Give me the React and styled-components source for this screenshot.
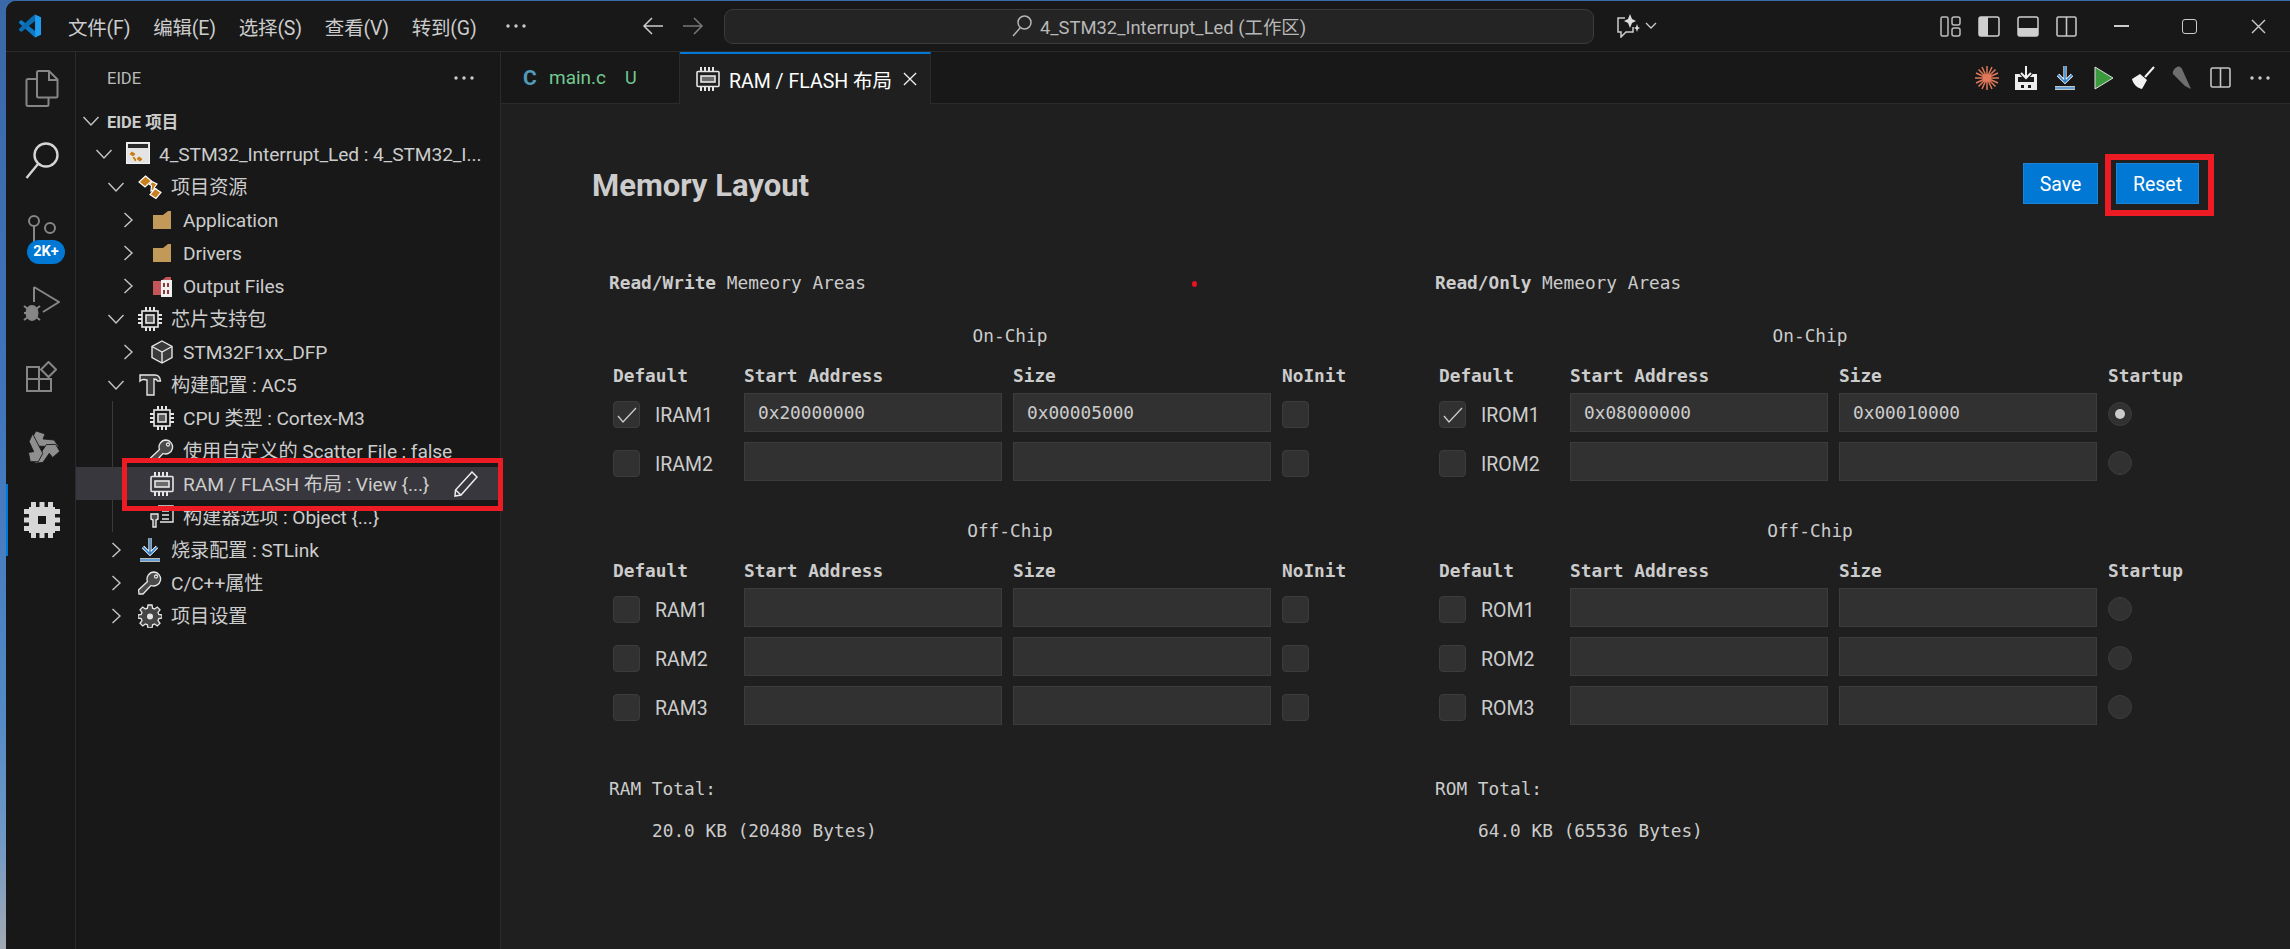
import React from "react"
import styled, { createGlobalStyle } from "styled-components"

const SANS = `Roboto, "Noto Sans CJK SC", sans-serif`
const MONO = `"DejaVu Sans Mono", "Noto Sans CJK SC", monospace`

const GlobalStyle = createGlobalStyle`
    html, body {
        margin: 0;
        padding: 0;
        background: #3e6fb0;
    }
    * {
        box-sizing: border-box;
    }
`

/* ---------- icons ---------- */

const VsCodeLogo = () => (
    <svg width="24" height="24" viewBox="0 0 100 100">
        <polygon points="4,32 4,38 71,98 71,71 14,25" fill="#0a7ac4" />
        <polygon points="71,2 71,29 14,75 4,68 4,62 52,17" fill="#0a6bb0" />
        <polygon points="71,2 96,14 96,86 71,98" fill="#1f9cf0" />
    </svg>
)

const ArrowLeft = ({ color = "#cccccc" }) => (
    <svg width="22" height="20" viewBox="0 0 22 20" fill="none" stroke={color} strokeWidth="1.5">
        <path d="M21 10H2M10 2l-8 8 8 8" />
    </svg>
)

const ArrowRight = ({ color = "#777777" }) => (
    <svg width="22" height="20" viewBox="0 0 22 20" fill="none" stroke={color} strokeWidth="1.5">
        <path d="M1 10h19M12 2l8 8-8 8" />
    </svg>
)

const SmallSearch = () => (
    <svg width="20" height="22" viewBox="0 0 20 22" fill="none" stroke="#b5b5b5" strokeWidth="1.5">
        <circle cx="12.5" cy="7.5" r="6.5" />
        <path d="M8 13L1 21" />
    </svg>
)

const ChatIcon = () => (
    <svg width="24" height="24" viewBox="0 0 24 24" fill="none">
        <path d="M9 4H2v14h3v5l5-5h7v-5" stroke="#cccccc" strokeWidth="1.5" />
        <path d="M14 0l2 5 4 2-4 2-2 5-2-5-4-2 4-2zM21 10l1 3 2 1-2 1-1 3-1-3-2-1 2-1z" fill="#dddddd" />
    </svg>
)

const ChevronSmall = () => (
    <svg width="12" height="8" viewBox="0 0 12 8" fill="none" stroke="#cccccc" strokeWidth="1.3">
        <path d="M1 1l5 5 5-5" />
    </svg>
)

const LayoutGrid = () => (
    <svg width="21" height="21" viewBox="0 0 21 21" fill="none" stroke="#bdbdbd" strokeWidth="1.5">
        <rect x="1" y="1" width="7" height="19" rx="1.5" />
        <rect x="12" y="1" width="8" height="8" rx="2" />
        <rect x="12" y="12" width="8" height="8" rx="2" />
    </svg>
)

const LayoutSide = () => (
    <svg width="22" height="21" viewBox="0 0 22 21">
        <rect x="1" y="1" width="20" height="19" rx="2" fill="none" stroke="#cfcfcf" strokeWidth="1.5" />
        <rect x="1" y="1" width="9" height="19" fill="#cfcfcf" />
    </svg>
)

const LayoutPanel = () => (
    <svg width="22" height="21" viewBox="0 0 22 21">
        <rect x="1" y="1" width="20" height="19" rx="2" fill="none" stroke="#cfcfcf" strokeWidth="1.5" />
        <rect x="1" y="12" width="20" height="8" fill="#cfcfcf" />
    </svg>
)

const SplitIcon = ({ color = "#c4c4c4" }) => (
    <svg width="21" height="21" viewBox="0 0 21 21" fill="none" stroke={color} strokeWidth="1.6">
        <rect x="1" y="1" width="19" height="19" rx="1.5" />
        <path d="M10.5 1v19" />
    </svg>
)

const CloseGlyph = ({ size = 15, color = "#cccccc" }) => (
    <svg width={size} height={size} viewBox="0 0 15 15" fill="none" stroke={color} strokeWidth="1.4">
        <path d="M1 1l13 13M14 1L1 14" />
    </svg>
)

const Dots = ({ color = "#cccccc" }) => (
    <svg width="20" height="4" viewBox="0 0 20 4" fill={color}>
        <circle cx="2" cy="2" r="1.7" />
        <circle cx="10" cy="2" r="1.7" />
        <circle cx="18" cy="2" r="1.7" />
    </svg>
)

const FilesIcon = () => (
    <svg width="34" height="37" viewBox="0 0 34 37" fill="none" stroke="#868686" strokeWidth="2">
        <path d="M12 2.5c0-.8.7-1.5 1.5-1.5H24l8.5 8.5V26c0 .8-.7 1.5-1.5 1.5H13.5c-.8 0-1.5-.7-1.5-1.5z" />
        <path d="M24 1v9h8.5M12 9H3c-.8 0-1.5.7-1.5 1.5v24c0 .8.7 1.5 1.5 1.5h19c.8 0 1.5-.7 1.5-1.5v-7" />
    </svg>
)

const SearchIcon = () => (
    <svg width="34" height="37" viewBox="0 0 34 37" fill="none" stroke="#d4d4d4" strokeWidth="2.4">
        <circle cx="21" cy="13" r="11.5" />
        <path d="M13 22L1.5 36" />
    </svg>
)

const ScmIcon = () => (
    <svg width="30" height="34" viewBox="0 0 30 34" fill="none" stroke="#868686" strokeWidth="2">
        <circle cx="7" cy="6" r="5" />
        <circle cx="23" cy="13" r="5" />
        <path d="M7 11v22" />
    </svg>
)

const DebugIcon = () => (
    <svg width="37" height="36" viewBox="0 0 37 36" fill="none" stroke="#868686" strokeWidth="2">
        <path d="M11 1l25 15-16 10M11 1v15" />
        <ellipse cx="9" cy="27" rx="5.5" ry="7" fill="#868686" />
        <path d="M1 20l4 3M1 27h4M1 34l4-3M17 20l-4 3M17 34l-4-3" />
    </svg>
)

const ExtensionsIcon = () => (
    <svg width="31" height="31" viewBox="0 0 31 31" fill="none" stroke="#868686" strokeWidth="2">
        <path d="M1 6h12v24H1zM1 18h24v12H13" />
        <path d="M22.5 1l7.5 7.5-7.5 7.500-7.500-7.500z" />
    </svg>
)

const STAR_ARM = "M12 1L21 4L19 9L30 10L35 17L13 16L8 8Z"

const StarIcon = () => (
    <svg width="36" height="36" viewBox="0 0 36 36" fill="#8f8f8f" stroke="#181818" strokeWidth="0.8">
        <path d={STAR_ARM} />
        <path d={STAR_ARM} transform="rotate(120 18 18)" />
        <path d={STAR_ARM} transform="rotate(240 18 18)" />
    </svg>
)

const ChipFilled = () => (
    <svg width="36" height="36" viewBox="0 0 36 36" fill="#d7d7d7">
        <path fillRule="evenodd" d="M5 5h26v26H5zM14 14v8h8v-8z" />
        <path d="M7 0h5v6H7zM15.500 0h5v6h-5zM24 0h5v6h-5zM7 30h5v6H7zM15.500 30h5v6h-5zM24 30h5v6h-5zM0 7h6v5H0zM0 15.500h6v5H0zM0 24h6v5H0zM30 7h6v5h-6zM30 15.500h6v5h-6zM30 24h6v5h-6z" />
    </svg>
)

const Chevron = ({ open }) => (
    <svg width="22" height="22" viewBox="0 0 22 22" fill="none" stroke="#c5c5c5" strokeWidth="1.4">
        {open ? <path d="M3.5 7l7.5 8 7.5-8" /> : <path d="M7.5 4l7.5 7-7.5 7" />}
    </svg>
)

const ProjectIcon = () => (
    <svg width="24" height="24" viewBox="0 0 24 24">
        <rect x="0.5" y="0.5" width="23" height="21" fill="#e4e4e4" stroke="#f2f2f2" />
        <rect x="2" y="2" width="20" height="4" fill="#2a2a2a" />
        <path d="M6 9l4 3-3 3-4-3zM13 14l4 3-3 3-4-3zM6 15l3 5 2-2-3-4z" fill="#c8801f" stroke="#ffffff" strokeWidth="0.5" />
    </svg>
)

const ResourceIcon = () => (
    <svg width="24" height="24" viewBox="0 0 24 24" fill="#c8801f" stroke="#ffffff" strokeWidth="1.2">
        <path d="M7.5 1l6 5-6.5 6-6-5z" />
        <path d="M14 6.5l5 2.5-3 4 2 1-5 2 .5-5.500-2-1z" />
        <path d="M17 13.5l6 4-5 6-6-4z" />
    </svg>
)

const FolderIcon = () => (
    <svg width="24" height="24" viewBox="0 0 24 24" fill="#c19a59">
        <path d="M3 7h10l5-4h3v18H3z" />
    </svg>
)

const OutputIcon = () => (
    <svg width="24" height="24" viewBox="0 0 24 24">
        <path d="M3 7h8l5-4h5v18H3z" fill="#c5565a" />
        <rect x="11" y="6" width="11" height="17" fill="#f0f0f0" />
        <path d="M13 9h2v4h-2zM17 9h2v4h-2zM13 16h2v4h-2zM17 16h2v4h-2z" fill="#8a3a3d" />
    </svg>
)

const ChipIcon = () => (
    <svg width="24" height="24" viewBox="0 0 24 24" fill="none" stroke="#e6e6e6" strokeWidth="1.6">
        <rect x="4" y="4" width="16" height="16" />
        <rect x="8" y="8" width="8" height="8" fill="#5a5a5a" />
        <path strokeWidth="2" d="M8 0v4M12 0v4M16 0v4M8 20v4M12 20v4M16 20v4M0 8h4M0 12h4M0 16h4M20 8h4M20 12h4M20 16h4" />
    </svg>
)

const CubeIcon = () => (
    <svg width="24" height="24" viewBox="0 0 24 24" stroke="#e6e6e6" strokeWidth="1.4" fill="#3a3a3a">
        <path d="M12 1l10 5.5v11L12 23 2 17.500v-11z" />
        <path d="M2 6.5l10 5.5 10-5.500M12 12v11" fill="none" />
    </svg>
)

const HammerIcon = () => (
    <svg width="24" height="24" viewBox="0 0 24 24" fill="#3c3c3c" stroke="#e6e6e6" strokeWidth="1.4">
        <path d="M2 2h15c3 0 5 2 5.500 6h-3c-.5-1.500-2-2-3.500-2v16H9V7C6 6 4 6 2 8z" />
    </svg>
)

const KeyIcon = () => (
    <svg width="24" height="24" viewBox="0 0 24 24" fill="#4a4a4a" stroke="#e6e6e6" strokeWidth="1.3">
        <path d="M16 1a7 7 0 1 1-3 13.500L5 23H1l-.5-4 9-8.500A7 7 0 0 1 16 1z" />
        <circle cx="18" cy="5.5" r="1.5" fill="#181818" />
    </svg>
)

const RamIcon = ({ fill = "none" }) => (
    <svg width="24" height="24" viewBox="0 0 24 24" fill="none" stroke="#e6e6e6" strokeWidth="1.6">
        <rect x="1" y="4.5" width="22" height="15" rx="1" fill={fill} />
        <rect x="5" y="9" width="14" height="6" fill="#6a6a6a" />
        <path strokeWidth="2" d="M5 0v4M9 0v4M13 0v4M17 0v4M5 20v4M9 20v4M13 20v4M17 20v4" />
    </svg>
)

const BuilderIcon = () => (
    <svg width="24" height="24" viewBox="0 0 24 24" fill="none" stroke="#e6e6e6" strokeWidth="1.4">
        <path d="M8 1h15v16H10" />
        <path d="M12 6h7M12 10h7M12 14h7" />
        <path d="M1 9h7v5l-2 1v7H3v-7l-2-1z" fill="#4a4a4a" />
    </svg>
)

const DownloadIcon = () => (
    <svg width="24" height="26" viewBox="0 0 24 26" fill="none">
        <path d="M12 1v16M5 10l7 7 7-7" stroke="#ffffff" strokeWidth="3.2" />
        <path d="M12 1v16M5 10l7 7 7-7" stroke="#2f7fc9" strokeWidth="1.6" />
        <path d="M2 23h20" stroke="#ffffff" strokeWidth="3.4" />
        <path d="M2 23h20" stroke="#2f7fc9" strokeWidth="1.5" />
    </svg>
)

const GearIcon = () => (
    <svg width="24" height="24" viewBox="0 0 24 24" fill="#464646" stroke="#e6e6e6" strokeWidth="1.3">
        <path d="M10 1h4l.6 3.200 2 .8L19.300 3 22 5.800 20 8.400l.8 2L24 11v3l-3.200.6-.8 2 2 2.700L19.300 22l-2.700-2-2 .8L14 24h-4l-.6-3.200-2-.8L4.700 22 2 19.300l2-2.700-.8-2L0 14v-3l3.200-.6.800-2-2-2.600L4.700 3l2.700 2 2-.8z" />
        <circle cx="12" cy="12.5" r="3" fill="#e6e6e6" stroke="none" />
    </svg>
)

const PencilOutline = () => (
    <svg width="24" height="26" viewBox="0 0 24 26" fill="none" stroke="#eeeeee" strokeWidth="1.5">
        <path d="M18 1l5 5L7 24l-6 1 .5-6z" />
        <path d="M1.5 19L7 24" />
    </svg>
)

const AsteriskIcon = () => (
    <svg width="26" height="26" viewBox="0 0 26 26" stroke="#e2785a" strokeWidth="1.5">
        <path d="M13 1v24M1 13h24M4.500 4.500l17 17M21.500 4.500l-17 17M8 2l10 22M18 2L8 24M2 8l22 10M24 8L2 18" />
    </svg>
)

const BuildIcon = () => (
    <svg width="24" height="26" viewBox="0 0 24 26">
        <path d="M1 9h22v16H1z" fill="#ededed" />
        <path d="M4 12h16v5H4zM7 20h3v3H7zM14 20h3v3h-3z" fill="#1a1a1a" />
        <path d="M12 1v11M7 8l5 5 5-5" fill="none" stroke="#1a1a1a" strokeWidth="4" />
        <path d="M12 1v11M7 8l5 5 5-5" fill="none" stroke="#f0f0f0" strokeWidth="2" />
    </svg>
)

const PlayIcon = () => (
    <svg width="20" height="24" viewBox="0 0 20 24">
        <path d="M1 1l18 11L1 23z" fill="#3b9a3e" stroke="#e0e0e0" strokeWidth="1" />
    </svg>
)

const BroomIcon = () => (
    <svg width="24" height="24" viewBox="0 0 24 24" fill="#f2f2f2">
        <path d="M23 1L14 11" stroke="#f2f2f2" strokeWidth="2" />
        <path d="M9 8l7 6-5 9c-5-1-9-5-10-10z" />
    </svg>
)

const PencilMuted = () => (
    <svg width="20" height="24" viewBox="0 0 20 24" fill="#6e6e6e">
        <path d="M5 1c2-1 4 0 5 2l9 20-6-3L1 8c-1-3 2-6 4-7z" />
    </svg>
)

const CheckMark = () => (
    <svg width="20" height="16" viewBox="0 0 20 16" fill="none" stroke="#cccccc" strokeWidth="1.3">
        <path d="M1 9l5 6L19 1" />
    </svg>
)

/* ---------- data ---------- */

const rows = [
    { level: 1, open: true, icon: <ProjectIcon />, text: "4_STM32_Interrupt_Led : 4_STM32_I..." },
    { level: 2, open: true, icon: <ResourceIcon />, text: "项目资源" },
    { level: 3, open: false, icon: <FolderIcon />, text: "Application" },
    { level: 3, open: false, icon: <FolderIcon />, text: "Drivers" },
    { level: 3, open: false, icon: <OutputIcon />, text: "Output Files" },
    { level: 2, open: true, icon: <ChipIcon />, text: "芯片支持包" },
    { level: 3, open: false, icon: <CubeIcon />, text: "STM32F1xx_DFP" },
    { level: 2, open: true, icon: <HammerIcon />, text: "构建配置 : AC5" },
    { level: 3, icon: <ChipIcon />, text: "CPU 类型 : Cortex-M3" },
    { level: 3, icon: <KeyIcon />, text: "使用自定义的 Scatter File : false" },
    { level: 3, icon: <RamIcon />, text: "RAM / FLASH 布局 : View {...}", selected: true },
    { level: 3, icon: <BuilderIcon />, text: "构建器选项 : Object {...}" },
    { level: 2, open: false, icon: <DownloadIcon />, text: "烧录配置 : STLink" },
    { level: 2, open: false, icon: <KeyIcon />, text: "C/C++属性" },
    { level: 2, open: false, icon: <GearIcon />, text: "项目设置" },
]

const menus = ["文件(F)", "编辑(E)", "选择(S)", "查看(V)", "转到(G)"]

/* ---------- parts ---------- */

const MemoryTable = ({ heading, names, lastHeader, radio, values = {}, checked, picked }) => (
    <div>
        <SubTitle>{heading}</SubTitle>
        <GridRow $header>
            <strong>Default</strong>
            <strong>Start Address</strong>
            <strong>Size</strong>
            <strong>{lastHeader}</strong>
        </GridRow>
        <RowStack>
            {names.map(name => (
                <GridRow key={name}>
                    <DefaultCell>
                        <CheckBox>{checked === name && <CheckMark />}</CheckBox>
                        <RegionName>{name}</RegionName>
                    </DefaultCell>
                    <Field>{values[name] ? values[name][0] : ""}</Field>
                    <Field>{values[name] ? values[name][1] : ""}</Field>
                    {radio ? <Radio $on={picked === name} /> : <CheckBox />}
                </GridRow>
            ))}
        </RowStack>
    </div>
)

const App = () => (
    <Desktop>
        <GlobalStyle />
        <Window>
            <TitleBar>
                <LeftGroup>
                    <VsCodeLogo />
                    <MenuBar>
                        {menus.map(menu => <MenuItem key={menu}>{menu}</MenuItem>)}
                        <MenuDots><Dots /></MenuDots>
                    </MenuBar>
                </LeftGroup>
                <NavGroup>
                    <ArrowLeft />
                    <ArrowRight />
                </NavGroup>
                <CommandCenter>
                    <SmallSearch />
                    <span>4_STM32_Interrupt_Led (工作区)</span>
                </CommandCenter>
                <ChatGroup>
                    <ChatIcon />
                    <ChevronSmall />
                </ChatGroup>
                <TitleRight>
                    <LayoutButtons>
                        <IconSlot><LayoutGrid /></IconSlot>
                        <IconSlot><LayoutSide /></IconSlot>
                        <IconSlot><LayoutPanel /></IconSlot>
                        <IconSlot><SplitIcon /></IconSlot>
                    </LayoutButtons>
                    <WindowButton><MinimizeBar /></WindowButton>
                    <WindowButton><MaximizeBox /></WindowButton>
                    <WindowButton><CloseGlyph /></WindowButton>
                </TitleRight>
            </TitleBar>
            <Main>
                <ActivityBar>
                    <ActivityItem><FilesIcon /></ActivityItem>
                    <ActivityItem><SearchIcon /></ActivityItem>
                    <ActivityItem>
                        <ScmIcon />
                        <Badge>2K+</Badge>
                    </ActivityItem>
                    <ActivityItem><DebugIcon /></ActivityItem>
                    <ActivityItem><ExtensionsIcon /></ActivityItem>
                    <ActivityItem><StarIcon /></ActivityItem>
                    <ActivityItem $active><ChipFilled /></ActivityItem>
                </ActivityBar>
                <SideBar>
                    <SideHeader>
                        <span>EIDE</span>
                        <Dots />
                    </SideHeader>
                    <Tree>
                        <IndentGuide />
                        <TreeTitle>
                            <TitleChevron><Chevron open /></TitleChevron>
                            EIDE 项目
                        </TreeTitle>
                        {rows.map(row => (
                            <TreeRow key={row.text} $level={row.level} $selected={row.selected}>
                                <ChevronSlot>
                                    {row.open !== undefined && <Chevron open={row.open} />}
                                </ChevronSlot>
                                <TreeIcon>{row.icon}</TreeIcon>
                                <TreeText>{row.text}</TreeText>
                                {row.selected && (
                                    <>
                                        <RowAction><PencilOutline /></RowAction>
                                        <RowHighlight />
                                    </>
                                )}
                            </TreeRow>
                        ))}
                    </Tree>
                </SideBar>
                <Editor>
                    <TabBar>
                        <Tab>
                            <CLetter>C</CLetter>
                            <TabName>main.c</TabName>
                            <TabStatus>U</TabStatus>
                        </Tab>
                        <ActiveTab>
                            <RamIcon />
                            <ActiveName>RAM / FLASH 布局</ActiveName>
                            <CloseGlyph size={14} color="#f0f0f0" />
                        </ActiveTab>
                        <EditorActions>
                            <ActionSlot><AsteriskIcon /></ActionSlot>
                            <ActionSlot><BuildIcon /></ActionSlot>
                            <ActionSlot><DownloadIcon /></ActionSlot>
                            <ActionSlot><PlayIcon /></ActionSlot>
                            <ActionSlot><BroomIcon /></ActionSlot>
                            <ActionSlot><PencilMuted /></ActionSlot>
                            <ActionSlot><SplitIcon /></ActionSlot>
                            <ActionSlot><Dots /></ActionSlot>
                        </EditorActions>
                    </TabBar>
                    <Page>
                        <PageHeader>
                            <PageTitle>Memory Layout</PageTitle>
                            <ButtonRow>
                                <PrimaryButton $width={75}>Save</PrimaryButton>
                                <PrimaryButton $width={83}>
                                    Reset
                                    <ButtonHighlight />
                                </PrimaryButton>
                            </ButtonRow>
                        </PageHeader>
                        <Sections>
                            <Section $width={802}>
                                <SectionHeading>
                                    <b>Read/Write</b> Memeory Areas
                                    <RedDot />
                                </SectionHeading>
                                <MemoryTable
                                    heading="On-Chip"
                                    names={["IRAM1", "IRAM2"]}
                                    lastHeader="NoInit"
                                    checked="IRAM1"
                                    values={{ IRAM1: ["0x20000000", "0x00005000"] }}
                                />
                                <OffChip>
                                    <MemoryTable
                                        heading="Off-Chip"
                                        names={["RAM1", "RAM2", "RAM3"]}
                                        lastHeader="NoInit"
                                    />
                                </OffChip>
                                <TotalLabel>RAM Total:</TotalLabel>
                                <TotalValue>20.0 KB (20480 Bytes)</TotalValue>
                            </Section>
                            <Section $width={750}>
                                <SectionHeading>
                                    <b>Read/Only</b> Memeory Areas
                                </SectionHeading>
                                <MemoryTable
                                    heading="On-Chip"
                                    names={["IROM1", "IROM2"]}
                                    lastHeader="Startup"
                                    radio
                                    checked="IROM1"
                                    picked="IROM1"
                                    values={{ IROM1: ["0x08000000", "0x00010000"] }}
                                />
                                <OffChip>
                                    <MemoryTable
                                        heading="Off-Chip"
                                        names={["ROM1", "ROM2", "ROM3"]}
                                        lastHeader="Startup"
                                        radio
                                    />
                                </OffChip>
                                <TotalLabel>ROM Total:</TotalLabel>
                                <TotalValue>64.0 KB (65536 Bytes)</TotalValue>
                            </Section>
                        </Sections>
                    </Page>
                </Editor>
            </Main>
        </Window>
    </Desktop>
)

/* ---------- styles ---------- */

const Desktop = styled.div`
    width: 2290px;
    height: 949px;
    padding: 1px 0 0 6px;
    overflow: hidden;
    background: linear-gradient(180deg, #3a68a8 0%, #3f74bb 40%, #5289c6 75%, #6f98c6 88%, #a3a9b3 100%);
    font-family: ${SANS};
    color: #cccccc;
`

const Window = styled.div`
    display: flex;
    flex-direction: column;
    height: 948px;
    background: #181818;
    border-top-left-radius: 10px;
    overflow: hidden;
`

const TitleBar = styled.div`
    display: flex;
    align-items: center;
    flex: none;
    height: 51px;
    border-bottom: 1px solid #2b2b2b;
    background: #181818;
`

const LeftGroup = styled.div`
    display: flex;
    align-items: center;
    flex: none;
    width: 636px;
    padding-left: 12px;
`

const MenuBar = styled.div`
    display: flex;
    align-items: center;
    gap: 23px;
    margin-left: 26px;
`

const MenuItem = styled.div`
    font-size: 19.5px;
    letter-spacing: -0.2px;
    white-space: nowrap;
    color: #cccccc;
`

const MenuDots = styled.div`
    display: flex;
    margin-left: 7px;
`

const NavGroup = styled.div`
    display: flex;
    align-items: center;
    gap: 18px;
    flex: none;
    width: 82px;
`

const CommandCenter = styled.div`
    display: flex;
    align-items: center;
    justify-content: center;
    gap: 8px;
    flex: none;
    width: 870px;
    height: 35px;
    border: 1px solid #3c3c3c;
    border-radius: 9px;
    background: #242424;
    font-size: 18.4px;
    color: #b8b8b8;
`

const ChatGroup = styled.div`
    display: flex;
    align-items: center;
    gap: 5px;
    margin-left: 22px;
`

const TitleRight = styled.div`
    display: flex;
    align-items: center;
    margin-left: auto;
    margin-right: -3px;
`

const LayoutButtons = styled.div`
    display: flex;
    margin-right: 1px;
`

const IconSlot = styled.div`
    display: flex;
    align-items: center;
    justify-content: center;
    width: 38.7px;
`

const WindowButton = styled.div`
    display: flex;
    align-items: center;
    justify-content: center;
    width: 68.7px;
    height: 50px;
`

const MinimizeBar = styled.div`
    width: 15px;
    height: 2px;
    background: #cccccc;
`

const MaximizeBox = styled.div`
    width: 15px;
    height: 15px;
    border: 1.5px solid #cccccc;
    border-radius: 3px;
`

const Main = styled.div`
    display: flex;
    flex: 1;
    min-height: 0;
`

const ActivityBar = styled.div`
    display: flex;
    flex-direction: column;
    flex: none;
    width: 70px;
    border-right: 1px solid #2b2b2b;
`

const ActivityItem = styled.div`
    position: relative;
    display: flex;
    align-items: center;
    justify-content: center;
    height: 72px;
    border-left: ${p => (p.$active ? "2px solid #0078d4" : "2px solid transparent")};
`

const Badge = styled.div`
    position: absolute;
    left: 19px;
    top: 44px;
    width: 38px;
    height: 24px;
    border-radius: 12px;
    background: #0078d4;
    color: #ffffff;
    font-size: 14.5px;
    font-weight: 700;
    line-height: 24px;
    text-align: center;
`

const SideBar = styled.div`
    display: flex;
    flex-direction: column;
    flex: none;
    width: 425px;
    border-right: 1px solid #2b2b2b;
`

const SideHeader = styled.div`
    display: flex;
    align-items: center;
    justify-content: space-between;
    flex: none;
    height: 52px;
    padding: 0 26px 0 31px;
    font-size: 16.5px;
    color: #bbbbbb;
`

const Tree = styled.div`
    position: relative;
    display: flex;
    flex-direction: column;
`

const IndentGuide = styled.div`
    position: absolute;
    left: 36px;
    top: 297px;
    width: 1px;
    height: 131px;
    background: #3a3a3a;
`

const TreeTitle = styled.div`
    display: flex;
    align-items: center;
    height: 33px;
    padding-left: 4px;
    font-size: 16.5px;
    font-weight: 700;
    color: #cccccc;
`

const TitleChevron = styled.div`
    display: flex;
    width: 27px;
`

const TreeRow = styled.div`
    position: relative;
    display: flex;
    align-items: center;
    height: 33px;
    padding-left: ${p => 5 + p.$level * 12}px;
    background: ${p => (p.$selected ? "#37373d" : "transparent")};
`

const ChevronSlot = styled.div`
    display: flex;
    flex: none;
    width: 33px;
`

const TreeIcon = styled.div`
    display: flex;
    align-items: center;
    justify-content: center;
    flex: none;
    width: 24px;
    height: 26px;
    margin-right: 9px;
`

const TreeText = styled.div`
    padding-top: 3px;
    font-size: 19.2px;
    letter-spacing: -0.1px;
    line-height: 30px;
    white-space: nowrap;
    color: #cccccc;
`

const RowAction = styled.div`
    position: absolute;
    left: 378px;
    top: 4px;
    display: flex;
`

const RowHighlight = styled.div`
    position: absolute;
    left: 46px;
    top: -9px;
    width: 381px;
    height: 53px;
    border: 5px solid #ed1c24;
    z-index: 2;
`

const Editor = styled.div`
    display: flex;
    flex-direction: column;
    flex: 1;
    min-width: 0;
    background: #1f1f1f;
`

const TabBar = styled.div`
    display: flex;
    flex: none;
    height: 52px;
    border-bottom: 1px solid #2b2b2b;
    background: #181818;
`

const Tab = styled.div`
    display: flex;
    align-items: center;
    flex: none;
    width: 179px;
    padding-left: 22px;
    border-right: 1px solid #2b2b2b;
`

const CLetter = styled.span`
    width: 26px;
    font-size: 21px;
    font-weight: 700;
    color: #519aba;
`

const TabName = styled.span`
    font-size: 19px;
    color: #73c991;
`

const TabStatus = styled.span`
    margin-left: 19px;
    font-size: 18px;
    color: #73c991;
`

const ActiveTab = styled.div`
    display: flex;
    align-items: center;
    flex: none;
    width: 251px;
    height: 52px;
    padding-left: 16px;
    border-top: 2px solid #0078d4;
    border-right: 1px solid #2b2b2b;
    background: #1f1f1f;
`

const ActiveName = styled.span`
    width: 174px;
    margin-left: 9px;
    font-size: 19.5px;
    color: #ffffff;
`

const EditorActions = styled.div`
    display: flex;
    align-items: center;
    margin-left: auto;
    padding-right: 11px;
`

const ActionSlot = styled.div`
    display: flex;
    align-items: center;
    justify-content: center;
    width: 39px;
`

const Page = styled.div`
    padding: 59px 91px 0 91px;
`

const PageHeader = styled.div`
    display: flex;
    align-items: center;
    justify-content: space-between;
    height: 41px;
`

const PageTitle = styled.div`
    padding-top: 3px;
    font-size: 31px;
    font-weight: 700;
    color: #cccccc;
`

const ButtonRow = styled.div`
    display: flex;
    gap: 18px;
`

const PrimaryButton = styled.div`
    position: relative;
    width: ${p => p.$width}px;
    height: 41px;
    border: 1px solid #1a85d9;
    background: #0078d4;
    color: #ffffff;
    font-size: 19.5px;
    line-height: 41px;
    text-align: center;
`

const ButtonHighlight = styled.div`
    position: absolute;
    left: -12px;
    top: -10px;
    right: -16px;
    bottom: -13px;
    border: 6px solid #ed1c24;
`

const Sections = styled.div`
    display: flex;
    gap: 24px;
    margin-top: 67px;
    padding-left: 17px;
`

const Section = styled.section`
    flex: none;
    width: ${p => p.$width}px;
    font-family: ${MONO};
    font-size: 17.8px;
    line-height: 24px;
`

const SectionHeading = styled.div`
    position: relative;
    height: 24px;
`

const RedDot = styled.div`
    position: absolute;
    left: 583px;
    top: 10px;
    width: 5px;
    height: 6px;
    border-radius: 50%;
    background: #e81123;
`

const SubTitle = styled.div`
    margin-top: 29px;
    text-align: center;
`

const OffChip = styled.div`
    margin-top: 38px;
`

const GridRow = styled.div`
    display: grid;
    grid-template-columns: 120px 258px 258px auto;
    column-gap: 11px;
    align-items: start;
    margin-top: ${p => (p.$header ? "16px" : "0")};
    padding-left: 4px;
`

const RowStack = styled.div`
    display: flex;
    flex-direction: column;
    gap: 10px;
    margin-top: 5px;
`

const DefaultCell = styled.div`
    display: flex;
    align-items: center;
    gap: 15px;
`

const CheckBox = styled.div`
    display: flex;
    align-items: center;
    justify-content: center;
    width: 27px;
    height: 27px;
    margin-top: 8px;
    border: 1px solid #3c3c3c;
    border-radius: 4px;
    background: #313131;
`

const Radio = styled.div`
    display: flex;
    align-items: center;
    justify-content: center;
    width: 24px;
    height: 24px;
    margin-top: 9px;
    border: 1px solid #3c3c3c;
    border-radius: 50%;
    background: #313131;
    &::after {
        content: "";
        display: ${p => (p.$on ? "block" : "none")};
        width: 10px;
        height: 10px;
        border-radius: 50%;
        background: #cccccc;
    }
`

const RegionName = styled.span`
    margin-top: 10px;
    font-family: ${SANS};
    font-size: 19.5px;
    color: #cccccc;
`

const Field = styled.div`
    height: 39px;
    padding: 0 13px;
    border: 1px solid #3c3c3c;
    background: #313131;
    line-height: 38px;
    color: #cccccc;
`

const TotalLabel = styled.div`
    margin-top: 52px;
`

const TotalValue = styled.div`
    margin-top: 18px;
    padding-left: 43px;
`

export default App
